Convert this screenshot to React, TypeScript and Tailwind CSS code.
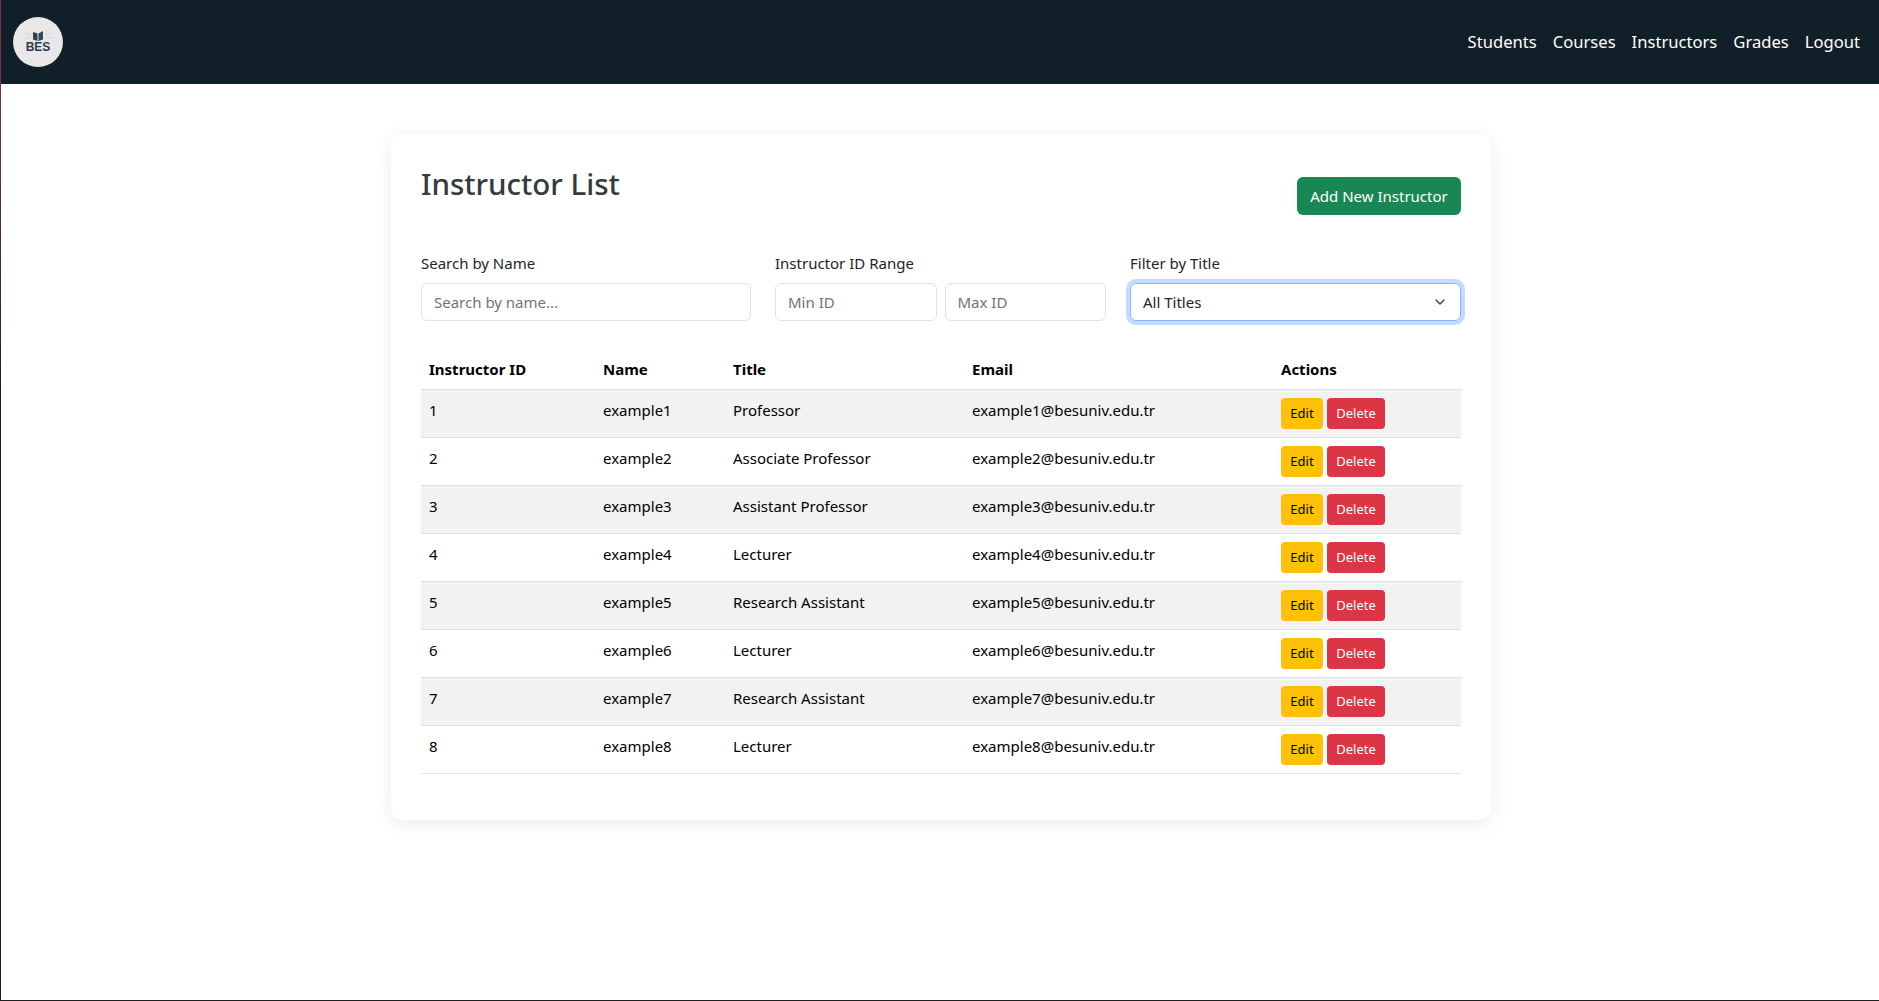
import React from 'react';
import { ChevronDown } from 'lucide-react';

const font = "font-['Noto_Sans','Open_Sans',sans-serif]";

const instructors = [
  { id: 1, name: 'example1', title: 'Professor' },
  { id: 2, name: 'example2', title: 'Associate Professor' },
  { id: 3, name: 'example3', title: 'Assistant Professor' },
  { id: 4, name: 'example4', title: 'Lecturer' },
  { id: 5, name: 'example5', title: 'Research Assistant' },
  { id: 6, name: 'example6', title: 'Lecturer' },
  { id: 7, name: 'example7', title: 'Research Assistant' },
  { id: 8, name: 'example8', title: 'Lecturer' },
];

const navLinks = ['Students', 'Courses', 'Instructors', 'Grades', 'Logout'];

const Logo: React.FC = () => (
  <div className="w-[50px] h-[50px] rounded-full bg-[#e8e8e8] flex flex-col items-center justify-center">
    <svg width="36" height="11" viewBox="0 0 36 11" className="-mt-[1px]">
      {/* rays */}
      <path d="M2 8 H10 M5 3 L11 6 M34 8 H26 M31 2 L25 6 M28 0 L24 4" stroke="#d6d6d6" strokeWidth="1" fill="none" />
      {/* open book */}
      <path d="M13 2 L17.5 3.5 V11 L13 9.5 Z" fill="#2f4150" />
      <path d="M23 1 L18.5 3.5 V11 L23 9.5 Z" fill="#2b4a5c" />
    </svg>
    <span className="font-['Liberation_Sans',sans-serif] text-[12px] leading-[13px] font-bold text-[#303b52]">BES</span>
  </div>
);

const App: React.FC = () => {
  return (
    <div className={`${font} relative min-h-[1001px] bg-white pl-px border-b border-[#1f1f24] text-[#212529] text-[15px]`}>
      {/* window edge */}
      <div className="absolute left-0 top-0 bottom-0 w-px bg-linear-to-b from-[#7a3040] from-[10%] to-[#1f1f24] to-[40%]" />

      {/* Navbar */}
      <nav className="h-[84px] bg-[#112028] flex items-center justify-between pl-3 pr-[19px]">
        <Logo />
        <div className="flex gap-4 text-[16.6px] text-white">
          {navLinks.map((link) => (
            <a key={link} href="#">{link}</a>
          ))}
        </div>
      </nav>

      {/* Card */}
      <main className="w-[1100px] ml-[390px] mt-[50px] px-[30px] pt-[30px] pb-[46px] bg-white rounded-xl shadow-[0_4px_20px_rgba(0,0,0,0.08)]">
        <div className="flex justify-between items-start">
          <h1 className="text-[29.5px] leading-[38px] font-medium text-[#343a40] mt-[1px]">Instructor List</h1>
          <button className="mt-[13px] h-[38px] w-[164px] rounded-md bg-[#198754] text-white text-[15px]">Add New Instructor</button>
        </div>

        <div className="grid grid-cols-[330px_331px_331px] gap-6 mt-[36px]">
          <div>
            <label className="block text-[15px] leading-6 mb-2">Search by Name</label>
            <input placeholder="Search by name..." className="w-full h-[38px] px-3 rounded-md border border-[#dee2e6] text-[15px] placeholder:text-[#6c757d]" />
          </div>
          <div>
            <label className="block text-[15px] leading-6 mb-2">Instructor ID Range</label>
            <div className="flex gap-2">
              <input placeholder="Min ID" className="w-1/2 min-w-0 h-[38px] px-3 rounded-md border border-[#dee2e6] text-[15px] placeholder:text-[#6c757d]" />
              <input placeholder="Max ID" className="w-1/2 min-w-0 h-[38px] px-3 rounded-md border border-[#dee2e6] text-[15px] placeholder:text-[#6c757d]" />
            </div>
          </div>
          <div>
            <label className="block text-[15px] leading-6 mb-2">Filter by Title</label>
            <div className="h-[38px] px-3 rounded-md border border-[#86b7fe] shadow-[0_0_0_4px_rgba(13,110,253,0.25)] flex items-center justify-between">
              <span>All Titles</span>
              <ChevronDown size={16} strokeWidth={2} className="text-[#343a40]" />
            </div>
          </div>
        </div>

        <table className="w-full mt-[28px] text-[15px] border-collapse table-fixed">
          <colgroup>
            <col className="w-[174px]" />
            <col className="w-[130px]" />
            <col className="w-[239px]" />
            <col className="w-[309px]" />
            <col />
          </colgroup>
          <thead>
            <tr className="border-b border-[#dee2e6] text-black">
              <th className="h-[40px] px-2 text-left font-bold">Instructor ID</th>
              <th className="h-[40px] px-2 text-left font-bold">Name</th>
              <th className="h-[40px] px-2 text-left font-bold">Title</th>
              <th className="h-[40px] px-2 text-left font-bold">Email</th>
              <th className="h-[40px] px-2 text-left font-bold">Actions</th>
            </tr>
          </thead>
          <tbody>
            {instructors.map((row, i) => (
              <tr key={row.id} className={`border-b border-[#dee2e6] text-black ${i % 2 === 0 ? 'bg-[#f2f2f2]' : 'bg-white'}`}>
                <td className="h-[48px] px-2 pt-[9px] align-top">{row.id}</td>
                <td className="h-[48px] px-2 pt-[9px] align-top">{row.name}</td>
                <td className="h-[48px] px-2 pt-[9px] align-top">{row.title}</td>
                <td className="h-[48px] px-2 pt-[9px] align-top">{row.name}@besuniv.edu.tr</td>
                <td className="h-[48px] px-2 pt-2 align-top">
                  <div className="flex gap-1">
                    <button className="h-[31px] w-[42px] pt-[2px] rounded bg-[#ffc107] text-black text-[13px]">Edit</button>
                    <button className="h-[31px] w-[58px] pt-[2px] rounded bg-[#dc3545] text-white text-[13px]">Delete</button>
                  </div>
                </td>
              </tr>
            ))}
          </tbody>
        </table>
      </main>
    </div>
  );
};

export default App;
